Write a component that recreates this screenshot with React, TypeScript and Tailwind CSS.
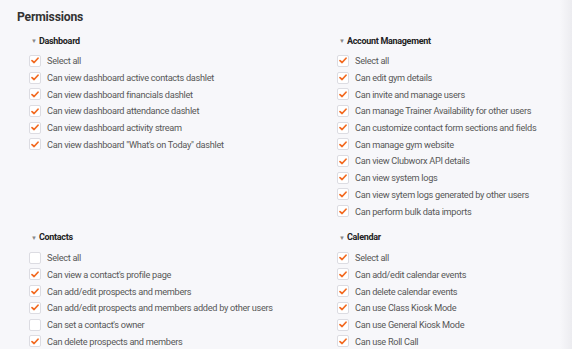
import React from 'react';

type Perm = { label: string; checked: boolean };
type Group = { title: string; items: Perm[] };

const on = (label: string): Perm => ({ label, checked: true });
const off = (label: string): Perm => ({ label, checked: false });

const groups: Group[][] = [
  [
    {
      title: 'Dashboard',
      items: [
        on('Select all'),
        on('Can view dashboard active contacts dashlet'),
        on('Can view dashboard financials dashlet'),
        on('Can view dashboard attendance dashlet'),
        on('Can view dashboard activity stream'),
        on('Can view dashboard "What\'s on Today" dashlet'),
      ],
    },
    {
      title: 'Account Management',
      items: [
        on('Select all'),
        on('Can edit gym details'),
        on('Can invite and manage users'),
        on('Can manage Trainer Availability for other users'),
        on('Can customize contact form sections and fields'),
        on('Can manage gym website'),
        on('Can view Clubworx API details'),
        on('Can view system logs'),
        on('Can view sytem logs generated by other users'),
        on('Can perform bulk data imports'),
      ],
    },
  ],
  [
    {
      title: 'Contacts',
      items: [
        off('Select all'),
        on("Can view a contact's profile page"),
        on('Can add/edit prospects and members'),
        on('Can add/edit prospects and members added by other users'),
        off("Can set a contact's owner"),
        on('Can delete prospects and members'),
      ],
    },
    {
      title: 'Calendar',
      items: [
        on('Select all'),
        on('Can add/edit calendar events'),
        on('Can delete calendar events'),
        on('Can use Class Kiosk Mode'),
        on('Can use General Kiosk Mode'),
        on('Can use Roll Call'),
      ],
    },
  ],
];

const Checkbox: React.FC<{ checked: boolean }> = ({ checked }) => (
  <span className="w-[12px] h-[12px] rounded-[2px] border border-[#dcdce2] bg-white flex items-center justify-center shrink-0">
    {checked && (
      <svg width="8" height="7" viewBox="0 0 8 7">
        <path d="M1 3.6 L3.1 5.5 L7 1.2" fill="none" stroke="#f26a21" strokeWidth="1.7" strokeLinecap="round" strokeLinejoin="round" />
      </svg>
    )}
  </span>
);

const Section: React.FC<{ group: Group }> = ({ group }) => (
  <div className="flex flex-col">
    <div className="h-[14px] flex items-center gap-[2px] pl-[2px]">
      <span className="text-[6px] text-[#888] leading-none">▼</span>
      <span className="text-[9px] font-bold tracking-[-0.3px] text-[#222] leading-none">{group.title}</span>
    </div>
    <div className="mt-[4.6px] flex flex-col">
      {group.items.map((p, i) => (
        <div key={i} className="h-[16.7px] flex items-center gap-[6px]">
          <Checkbox checked={p.checked} />
          <span className="text-[9.2px] tracking-[-0.3px] text-[#585858] leading-none whitespace-nowrap">{p.label}</span>
        </div>
      ))}
    </div>
  </div>
);

export default function App() {
  return (
    <div className="w-[572px] h-[349px] overflow-hidden flex bg-[#f7f7fa]" style={{ fontFamily: 'Roboto, "Liberation Sans", sans-serif' }}>
      <div className="flex-1 pl-[17px] pt-[9px]">
        <h2 className="text-[12.2px] font-bold tracking-[-0.2px] text-[#333] leading-[16px]">Permissions</h2>
        <div className="mt-[9px] pl-[12px] flex flex-col gap-[11.4px]">
          {groups.map((row, r) => (
            <div key={r} className="grid grid-cols-[308px_1fr]">
              {row.map(g => (
                <Section key={g.title} group={g} />
              ))}
            </div>
          ))}
        </div>
      </div>
      <div className="w-[12px] bg-gradient-to-r from-[#f7f7fa] to-[#ececf0]" />
    </div>
  );
}
